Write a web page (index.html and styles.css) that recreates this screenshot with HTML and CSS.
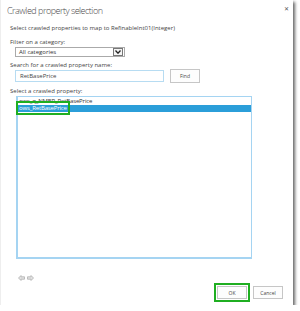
FILE: index.html
```html
<!DOCTYPE html>
<html lang="en">
  <head>
    <meta charset="UTF-8" />
    <title>Crawled property selection</title>
    <link rel="stylesheet" href="styles.css">
  </head>
  <body>
    <div class="dialog">
      <div class="dialog-header">
        <h2>Crawled property selection</h2>
        <span class="close">&#x2715;</span>
      </div>
      <div class="dialog-body">
        <p class="intro">Select crawled properties to map to RefinableInt01(Integer)</p>
        <label>Filter on a category:</label>
        <div class="select">
          <span>All categories</span>
          <span class="select-arrow">
            <svg width="6" height="4" viewBox="0 0 6 4"><path d="M0.5 0.5 L3 3.2 L5.5 0.5" fill="none" stroke="#222" stroke-width="1.3"/></svg>
          </span>
        </div>
        <label class="gap">Search for a crawled property name:</label>
        <div class="search-row">
          <div class="search-input">RetBasePrice</div>
          <button class="btn">Find</button>
        </div>
        <label class="gap">Select a crawled property:</label>
        <div class="listbox">
          <div class="option">ows_q_NMBR_RetBasePrice</div>
          <div class="option selected"><span class="mark">ows_RetBasePrice</span></div>
        </div>
        <div class="pager">
          <svg width="16" height="6" viewBox="0 0 16 6">
            <path d="M0.5 3 L3 0.5 L3 1.8 L6.5 1.8 L6.5 4.2 L3 4.2 L3 5.5 Z" fill="#e2e2e2" stroke="#b0b0b0" stroke-width="0.8"/>
            <path d="M15.5 3 L13 0.5 L13 1.8 L9.5 1.8 L9.5 4.2 L13 4.2 L13 5.5 Z" fill="#e2e2e2" stroke="#b0b0b0" stroke-width="0.8"/>
          </svg>
        </div>
      </div>
      <div class="dialog-footer">
        <span class="mark-btn"><button class="btn">OK</button></span>
        <button class="btn">Cancel</button>
      </div>
    </div>
  </body>
</html>
```

FILE: styles.css
```css
body {
  margin: 0;
  background-color: #fff;
  font-family: "Open Sans", "Noto Sans", sans-serif;
  color: #444;
}
.dialog {
  width: 293px;
  height: 305px;
  background-color: #fff;
  box-shadow: 2px 2px 3px rgba(0, 0, 0, 0.6);
  border-left: 1px solid #eee;
  box-sizing: border-box;
  display: flex;
  flex-direction: column;
}
.dialog-header {
  display: flex;
  justify-content: space-between;
  align-items: flex-start;
  padding: 4px 4px 0 6px;
  height: 14px;
}
h2 {
  margin: 0;
  font-size: 9px;
  line-height: 14px;
  font-weight: 300;
  color: #4a4a4a;
  letter-spacing: -0.5px;
}
.close {
  font-size: 5.5px;
  line-height: 6px;
  color: #555;
  margin-top: 2px;
}
.dialog-body {
  padding: 6px 0 0 9px;
  flex: 1;
}
.intro {
  margin: 0 0 6px;
  font-size: 6px;
  line-height: 8px;
}
label {
  display: block;
  font-size: 6px;
  line-height: 8px;
}
label.gap {
  margin-top: 4px;
}
.select {
  width: 105px;
  height: 8px;
  margin: 1px 0 0 5px;
  border: 1px solid #aaa;
  display: flex;
  justify-content: space-between;
  align-items: center;
  font-size: 6px;
  color: #333;
  padding-left: 3px;
}
.select-arrow {
  width: 8px;
  height: 6px;
  border: 1px solid #777;
  margin-right: 1px;
  display: flex;
  align-items: center;
  justify-content: center;
  background-color: #f4f4f4;
}
.search-row {
  display: flex;
  align-items: center;
  gap: 6px;
  margin-left: 5px;
}
.search-input {
  width: 143px;
  height: 10px;
  border: 1px solid #b7dcf2;
  font-size: 6px;
  padding-left: 4px;
  line-height: 10px;
  color: #444;
}
.btn {
  font-family: inherit;
  font-size: 5px;
  color: #444;
  background-color: #fdfdfd;
  border: 1px solid #c6c6c6;
  width: 30px;
  height: 14px;
  padding: 0;
}
.dialog-footer .btn {
  height: 13px;
}
.listbox {
  width: 233px;
  height: 159px;
  margin-left: 6px;
  margin-top: 1px;
  border: 1px solid #a5d4f2;
  border-width: 1px 1px 2px 2px;
  padding-top: 1px;
}
.option {
  font-size: 6px;
  line-height: 7px;
  height: 7px;
  padding-left: 1px;
  color: #333;
  letter-spacing: -0.15px;
}
.option.selected {
  background-color: #2b9ed9;
  color: #fff;
}
.mark {
  outline: 2px solid #1fae21;
  outline-offset: 1px;
}
.pager {
  margin: 5px 0 0 8px;
  height: 6px;
}
.dialog-footer {
  display: flex;
  justify-content: flex-end;
  align-items: center;
  gap: 3px;
  padding: 0 10px 3px 0;
}
.mark-btn {
  border: 2px solid #1fae21;
  padding: 1px;
  display: flex;
}
```
